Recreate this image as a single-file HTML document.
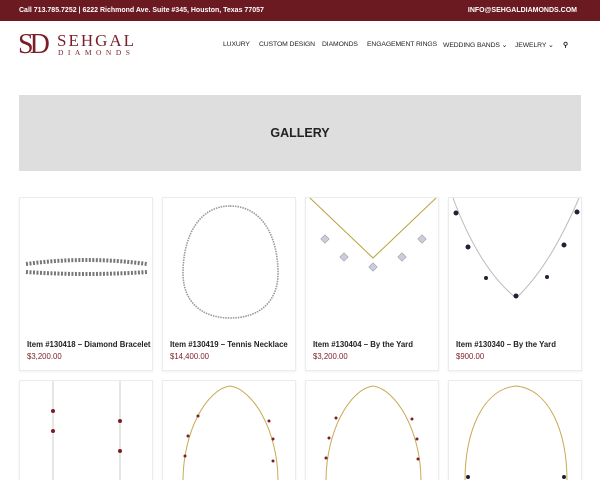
<!DOCTYPE html>
<html><head><meta charset="utf-8"><style>
*{margin:0;padding:0;box-sizing:border-box}
html,body{width:600px;height:480px;overflow:hidden}
body{background:#fff;font-family:"Liberation Sans",sans-serif;position:relative}
.top{position:absolute;left:0;top:0;width:600px;height:21px;background:#6b1a22;color:#fff;font-size:7px;font-weight:bold;line-height:21px}
.top .l{position:absolute;left:19px}.top .r{position:absolute;right:23px}
.logo{position:absolute;left:18px;top:31px;color:#7a1f28;font-family:"Liberation Serif",serif}
.nav{position:absolute;left:0;top:41px;font-size:6.8px;color:#222;letter-spacing:-.1px}
.nav span{position:absolute;white-space:nowrap}
.gal{position:absolute;left:19px;top:95px;width:562px;height:76px;background:#dedede;text-align:center;line-height:76px;font-size:12.5px;font-weight:bold;color:#222}
.card{position:absolute;width:134px;height:174px;border:1px solid #ececec;box-shadow:0 1px 2px rgba(0,0,0,.06);overflow:hidden;background:#fff}
.card.b{height:100px;border-bottom:none}
.card svg{position:absolute;left:0;top:0}
.t{position:absolute;left:7px;top:142px;font-size:7.8px;font-weight:bold;color:#222;white-space:nowrap}
.p{position:absolute;left:7px;top:154px;font-size:7.8px;color:#7a1f28}
</style></head><body>
<div class="top"><span class="l">Call 713.785.7252 | 6222 Richmond Ave. Suite #345, Houston, Texas 77057</span><span class="r">INFO@SEHGALDIAMONDS.COM</span></div>
<div class="logo"><span style="position:absolute;left:0;top:0;font-size:28px;letter-spacing:-4px;line-height:28px">SD</span><span style="position:absolute;left:39px;top:1px;font-size:17px;letter-spacing:2px;line-height:17px">SEHGAL</span><span style="position:absolute;left:40px;top:18px;font-size:7.5px;letter-spacing:4.5px;line-height:8px">DIAMONDS</span></div>
<div class="nav"><span style="left:223px">LUXURY</span><span style="left:259px">CUSTOM DESIGN</span><span style="left:322px">DIAMONDS</span><span style="left:367px">ENGAGEMENT RINGS</span><span style="left:443px">WEDDING BANDS &#8964;</span><span style="left:515px">JEWELRY &#8964;</span><span style="left:563px;font-weight:bold">&#9906;</span></div>
<div class="gal">GALLERY</div>

<div class="card" style="left:19px;top:197px"><svg width="134" height="174"><g stroke="#777" fill="none"><path d="M6 66 Q66 58 127 66" stroke-width="4" stroke-dasharray="2 1.5"/><path d="M6 74 Q66 78 127 74" stroke-width="4" stroke-dasharray="2 1.5"/></g></svg><div class="t">Item #130418 – Diamond Bracelet</div><div class="p">$3,200.00</div></div>
<div class="card" style="left:162px;top:197px"><svg width="134" height="174"><path d="M67 8 C100 8 115 40 115 75 C115 105 95 120 67 120 C40 120 20 105 20 75 C20 40 35 8 67 8Z" fill="none" stroke="#999" stroke-width="1.6" stroke-dasharray="1.5 1"/></svg><div class="t">Item #130419 – Tennis Necklace</div><div class="p">$14,400.00</div></div>
<div class="card" style="left:305px;top:197px"><svg width="134" height="174"><path d="M4 0 L67 60 L130 0" fill="none" stroke="#b9a23a" stroke-width="1"/><g fill="#ccd" stroke="#999" stroke-width=".5"><rect x="16" y="38" width="6" height="6" transform="rotate(45 19 41)"/><rect x="35" y="56" width="6" height="6" transform="rotate(45 38 59)"/><rect x="64" y="66" width="6" height="6" transform="rotate(45 67 69)"/><rect x="93" y="56" width="6" height="6" transform="rotate(45 96 59)"/><rect x="113" y="38" width="6" height="6" transform="rotate(45 116 41)"/></g></svg><div class="t">Item #130404 – By the Yard</div><div class="p">$3,200.00</div></div>
<div class="card" style="left:448px;top:197px"><svg width="134" height="174"><path d="M4 0 Q30 70 67 100 Q100 70 130 0" fill="none" stroke="#bbb" stroke-width="1"/><g fill="#223"><circle cx="7" cy="15" r="2.5"/><circle cx="19" cy="49" r="2.5"/><circle cx="37" cy="80" r="2"/><circle cx="67" cy="98" r="2.5"/><circle cx="98" cy="79" r="2"/><circle cx="115" cy="47" r="2.5"/><circle cx="128" cy="14" r="2.5"/></g></svg><div class="t">Item #130340 – By the Yard</div><div class="p">$900.00</div></div>

<div class="card b" style="left:19px;top:380px"><svg width="134" height="100"><path d="M33 0 L33 100 M100 0 L100 100" stroke="#ccc"/><g fill="#7a1f28"><circle cx="33" cy="30" r="2"/><circle cx="33" cy="50" r="2"/><circle cx="100" cy="40" r="2"/><circle cx="100" cy="70" r="2"/></g></svg></div>
<div class="card b" style="left:162px;top:380px"><svg width="134" height="100"><path d="M67 5 C90 8 115 50 115 100 M67 5 C44 8 20 50 20 100" fill="none" stroke="#c8aa55"/><g fill="#7a1f28"><circle cx="35" cy="35" r="1.5"/><circle cx="25" cy="55" r="1.5"/><circle cx="22" cy="75" r="1.5"/><circle cx="106" cy="40" r="1.5"/><circle cx="110" cy="58" r="1.5"/><circle cx="110" cy="80" r="1.5"/></g></svg></div>
<div class="card b" style="left:305px;top:380px"><svg width="134" height="100"><path d="M67 5 C90 8 115 50 115 100 M67 5 C44 8 20 50 20 100" fill="none" stroke="#c8aa55"/><g fill="#7a1f28"><circle cx="30" cy="37" r="1.5"/><circle cx="23" cy="57" r="1.5"/><circle cx="20" cy="77" r="1.5"/><circle cx="106" cy="38" r="1.5"/><circle cx="111" cy="58" r="1.5"/><circle cx="112" cy="78" r="1.5"/></g></svg></div>
<div class="card b" style="left:448px;top:380px"><svg width="134" height="100"><path d="M67 5 C100 8 118 50 118 100 M67 5 C34 8 16 50 16 100" fill="none" stroke="#c8aa55"/><g fill="#223"><circle cx="19" cy="96" r="2"/><circle cx="115" cy="96" r="2"/></g></svg></div>
</body></html>
